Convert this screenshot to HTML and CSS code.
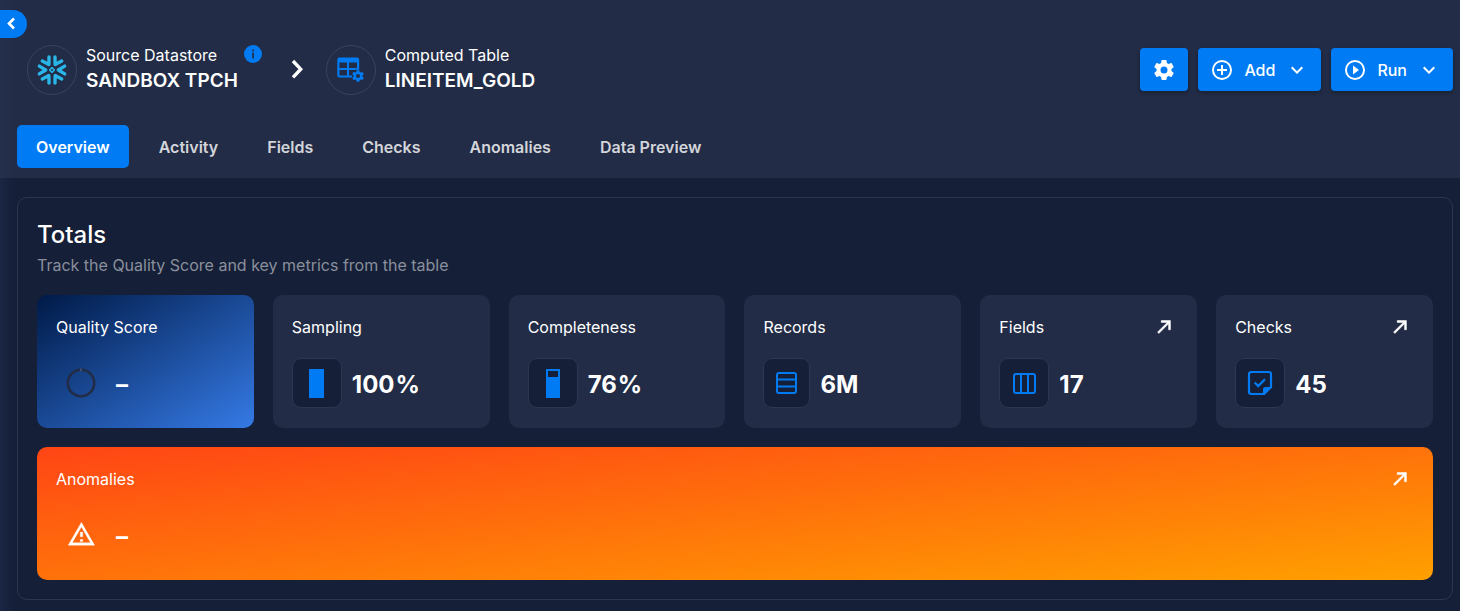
FILE: index.html
```html
<!DOCTYPE html>
<html lang="en">
<head>
<meta charset="utf-8">
<meta name="viewport" content="width=device-width, initial-scale=1">
<title>LINEITEM_GOLD</title>
<link rel="stylesheet" href="styles.css">
</head>
<body>
<svg class="defs" aria-hidden="true">
  <symbol id="gear" viewBox="0 0 24 24"><path d="M12,15.5A3.5,3.5 0 0,1 8.5,12A3.5,3.5 0 0,1 12,8.5A3.5,3.5 0 0,1 15.5,12A3.5,3.5 0 0,1 12,15.5M19.43,12.97C19.47,12.65 19.5,12.33 19.5,12C19.5,11.67 19.47,11.34 19.43,11L21.54,9.37C21.73,9.22 21.78,8.95 21.66,8.73L19.66,5.27C19.54,5.05 19.27,4.96 19.05,5.05L16.56,6.05C16.04,5.66 15.5,5.32 14.87,5.07L14.5,2.42C14.46,2.18 14.25,2 14,2H10C9.75,2 9.54,2.18 9.5,2.42L9.13,5.07C8.5,5.32 7.96,5.66 7.44,6.05L4.95,5.05C4.73,4.96 4.46,5.05 4.34,5.27L2.34,8.73C2.21,8.95 2.27,9.22 2.46,9.37L4.57,11C4.53,11.34 4.5,11.67 4.5,12C4.5,12.33 4.53,12.65 4.57,12.97L2.46,14.63C2.27,14.78 2.21,15.05 2.34,15.27L4.34,18.73C4.46,18.95 4.73,19.03 4.95,18.95L7.44,17.94C7.96,18.34 8.5,18.68 9.13,18.93L9.5,21.58C9.54,21.82 9.75,22 10,22H14C14.25,22 14.46,21.82 14.5,21.58L14.87,18.93C15.5,18.67 16.04,18.34 16.56,17.94L19.05,18.95C19.27,19.03 19.54,18.95 19.66,18.73L21.66,15.27C21.78,15.05 21.73,14.78 21.54,14.63L19.43,12.97Z"/></symbol>
  <symbol id="chevron-down" viewBox="0 0 24 24"><path d="M7.41,8.58L12,13.17L16.59,8.58L18,10L12,16L6,10L7.41,8.58Z"/></symbol>
  <symbol id="arrow" viewBox="0 0 24 24"><path d="M5,17.59L15.59,7H9V5H19V15H17V8.41L6.41,19L5,17.59Z"/></symbol>
</svg>

<header class="header">
  <button class="toggle" type="button" aria-label="Expand tree">
    <svg width="22" height="22" viewBox="0 0 22 22"><path d="M14 5.5L9 10.5L14 15.5" fill="none" stroke="#fff" stroke-width="2.6"/></svg>
  </button>
  <div class="topbar">
    <nav class="crumbs" aria-label="Breadcrumb">
      <div class="crumb">
        <span class="avatar">
          <svg width="32" height="32" viewBox="-16 -16 32 32">
            <g fill="none" stroke="#29b5e8" stroke-width="3.4" stroke-linecap="round" stroke-linejoin="round">
              <path d="M-12.7-3.9L-6.3 0L-12.7 3.9"/>
              <path d="M-12.7-3.9L-6.3 0L-12.7 3.9" transform="rotate(60)"/>
              <path d="M-12.7-3.9L-6.3 0L-12.7 3.9" transform="rotate(120)"/>
              <path d="M-12.7-3.9L-6.3 0L-12.7 3.9" transform="rotate(180)"/>
              <path d="M-12.7-3.9L-6.3 0L-12.7 3.9" transform="rotate(240)"/>
              <path d="M-12.7-3.9L-6.3 0L-12.7 3.9" transform="rotate(300)"/>
            </g>
            <path d="M0-2.4L2.4 0L0 2.4L-2.4 0Z" fill="none" stroke="#29b5e8" stroke-width="1.5" stroke-linejoin="round"/>
          </svg>
        </span>
        <span class="crumb-text"><span class="kind">Source Datastore</span><span class="name">SANDBOX TPCH</span></span>
        <button class="info" type="button" aria-label="Datastore details">
          <svg width="18" height="18" viewBox="0 0 18 18"><circle cx="9" cy="9" r="9" fill="#007bf3"/><path d="M8.2 7.6h1.7v6H8.2zM8.2 4.4h1.7v1.8H8.2z" fill="#222c46"/></svg>
        </button>
      </div>
      <svg class="sep" width="16" height="24" viewBox="0 0 16 24"><path d="M4 3L11.7 11.2L4 19.4" fill="none" stroke="#fff" stroke-width="3.4"/></svg>
      <div class="crumb">
        <span class="avatar">
          <svg width="32" height="32" viewBox="2 0 32 32" fill="#007bf3">
            <path fill-rule="evenodd" d="M6.5 3.5H24A2.2 2.2 0 0 1 26.2 5.7V23.5H6.5A2.2 2.2 0 0 1 4.3 21.3V5.7A2.2 2.2 0 0 1 6.5 3.5ZM6.4 8.6V14H14V8.6ZM16 8.6V14H24V8.6ZM6.4 16V21.4H14V16ZM16 16V21.4H24V16Z"/>
            <path d="M19 24V19L22 15.8L27 15.8V24Z" fill="#222c46"/>
            <svg x="18" y="15" width="14" height="14" viewBox="0 0 24 24"><use href="#gear"/></svg>
          </svg>
        </span>
        <span class="crumb-text"><span class="kind">Computed Table</span><span class="name">LINEITEM_GOLD</span></span>
      </div>
    </nav>
    <div class="actions">
      <button class="btn" type="button" aria-label="Settings"><svg class="i24"><use href="#gear"/></svg></button>
      <button class="btn" type="button">
        <svg class="i24" viewBox="0 0 24 24"><path d="M12,20C7.59,20 4,16.41 4,12C4,7.59 7.59,4 12,4C16.41,4 20,7.59 20,12C20,16.41 16.41,20 12,20M12,2A10,10 0 0,0 2,12A10,10 0 0,0 12,22A10,10 0 0,0 22,12A10,10 0 0,0 12,2M13,7H11V11H7V13H11V17H13V13H17V11H13V7Z"/></svg>
        <span>Add</span>
        <svg class="i24"><use href="#chevron-down"/></svg>
      </button>
      <button class="btn" type="button">
        <svg class="i24" viewBox="0 0 24 24"><path d="M12,20C7.59,20 4,16.41 4,12C4,7.59 7.59,4 12,4C16.41,4 20,7.59 20,12C20,16.41 16.41,20 12,20M12,2A10,10 0 0,0 2,12A10,10 0 0,0 12,22A10,10 0 0,0 22,12A10,10 0 0,0 12,2M10,16.5L16,12L10,7.5V16.5Z"/></svg>
        <span>Run</span>
        <svg class="i24"><use href="#chevron-down"/></svg>
      </button>
    </div>
  </div>
  <nav class="tabs" aria-label="Sections">
    <a class="tab active" href="#overview" aria-current="page">Overview</a>
    <a class="tab" href="#activity">Activity</a>
    <a class="tab" href="#fields">Fields</a>
    <a class="tab" href="#checks">Checks</a>
    <a class="tab" href="#anomalies">Anomalies</a>
    <a class="tab" href="#preview">Data Preview</a>
  </nav>
</header>

<main class="main">
  <section class="panel">
    <h2 class="title">Totals</h2>
    <p class="subtitle">Track the Quality Score and key metrics from the table</p>
    <div class="cards">
      <article class="card quality">
        <div class="card-head"><h3 class="label">Quality Score</h3></div>
        <div class="metric">
          <span class="tile plain"><svg width="30" height="30" viewBox="0 0 30 30"><circle cx="15" cy="15" r="13.2" fill="none" stroke="#222c46" stroke-width="2.6"/><path d="M15 .5V3.2" stroke="#5d7093"/></svg></span>
          <span class="value">–</span>
        </div>
      </article>
      <article class="card">
        <div class="card-head"><h3 class="label">Sampling</h3></div>
        <div class="metric">
          <span class="tile"><svg width="15" height="29"><rect width="15" height="29" fill="#007bf3"/></svg></span>
          <span class="value">100<span class="unit">%</span></span>
        </div>
      </article>
      <article class="card">
        <div class="card-head"><h3 class="label">Completeness</h3></div>
        <div class="metric">
          <span class="tile"><svg width="14" height="29"><path fill="#007bf3" fill-rule="evenodd" d="M0 0H14V29H0ZM2 2V8H12V2Z"/></svg></span>
          <span class="value">76<span class="unit">%</span></span>
        </div>
      </article>
      <article class="card">
        <div class="card-head"><h3 class="label">Records</h3></div>
        <div class="metric">
          <span class="tile narrow"><svg width="21" height="22" viewBox="0 0 21 22" fill="none" stroke="#007bf3" stroke-width="2"><rect x="1" y="1" width="19" height="20" rx="2"/><path d="M1 7.5H20M1 14.5H20"/></svg></span>
          <span class="value">6M</span>
        </div>
      </article>
      <article class="card">
        <div class="card-head"><h3 class="label">Fields</h3><a class="go" href="#fields" aria-label="Open fields"><svg width="22" height="22"><use href="#arrow"/></svg></a></div>
        <div class="metric">
          <span class="tile"><svg width="23" height="21" viewBox="0 0 23 21" fill="none" stroke="#007bf3" stroke-width="2"><rect x="1" y="1" width="21" height="19" rx="2"/><path d="M8 1V20M15 1V20"/></svg></span>
          <span class="value">17</span>
        </div>
      </article>
      <article class="card">
        <div class="card-head"><h3 class="label">Checks</h3><a class="go" href="#checks" aria-label="Open checks"><svg width="22" height="22"><use href="#arrow"/></svg></a></div>
        <div class="metric">
          <span class="tile"><svg width="26" height="26" viewBox="0 0 26 26"><path d="M16.5 24H4.2A2.2 2.2 0 0 1 2 21.8V4.2A2.2 2.2 0 0 1 4.2 2H21.8A2.2 2.2 0 0 1 24 4.2V17Z" fill="none" stroke="#007bf3" stroke-width="2.2" stroke-linejoin="round"/><path d="M16 25V19.5A2.5 2.5 0 0 1 18.5 17H25V17.5L17.5 25Z" fill="#007bf3"/><path d="M7.7 12.5L11.2 16L18 9.2" fill="none" stroke="#007bf3" stroke-width="2.3"/></svg></span>
          <span class="value">45</span>
        </div>
      </article>
      <article class="card anomalies">
        <div class="card-head"><h3 class="label">Anomalies</h3><a class="go" href="#anomalies" aria-label="Open anomalies"><svg width="22" height="22"><use href="#arrow"/></svg></a></div>
        <div class="metric">
          <span class="tile plain"><svg width="29" height="29" viewBox="0 1 24 24" fill="#fff"><path d="M12,2L1,21H23M12,6L19.53,19H4.47M11,10V14H13V10M11,16V18H13V16" stroke="#fff" stroke-width=".3"/></svg></span>
          <span class="value">–</span>
        </div>
      </article>
    </div>
  </section>
</main>
</body>
</html>
```
FILE: styles.css
```css
:root {
  --bg: #151f38;
  --surface: #222c46;
  --line: #2c3650;
  --blue: #007bf3;
}

* {
  box-sizing: border-box;
}

body {
  margin: 0;
  min-height: 100vh;
  background: linear-gradient(to right, #1a2644, transparent 14px) var(--bg);
  color: #fff;
  font-family: Inter, "Open Sans", sans-serif;
  font-size: 16px;
  line-height: 24px;
}

button {
  border: 0;
  padding: 0;
  background: none;
  color: inherit;
  font: inherit;
  cursor: pointer;
}

svg {
  display: block;
  flex: none;
}

.defs {
  position: absolute;
  width: 0;
  height: 0;
}

.i24 {
  width: 24px;
  height: 24px;
  fill: currentColor;
}

.header {
  position: relative;
  padding: 45px 7px 10px 17px;
  background: linear-gradient(to right, #25304d, transparent 14px) var(--surface);
}

.toggle {
  position: absolute;
  top: 10px;
  left: 0;
  width: 27px;
  height: 28px;
  border-radius: 0 14px 14px 0;
  background: var(--blue);
}

.topbar {
  display: flex;
  align-items: flex-start;
  justify-content: space-between;
}

.crumbs,
.crumb {
  display: flex;
  align-items: center;
}

.crumbs {
  padding-left: 10px;
}

.avatar {
  display: grid;
  place-items: center;
  width: 50px;
  height: 50px;
  margin-right: 9px;
  border: 1px solid #3a435b;
  border-radius: 50%;
}

.crumb-text {
  display: flex;
  flex-direction: column;
  gap: 2px;
}

.kind {
  line-height: 20px;
}

.name {
  font-size: 19px;
  font-weight: 600;
  line-height: 28px;
}

.info {
  align-self: flex-start;
  margin-left: 6px;
}

.sep {
  margin: 0 21px 0 27px;
}

.actions {
  display: flex;
  gap: 10px;
  padding-top: 3px;
}

.btn {
  display: flex;
  align-items: center;
  gap: 10px;
  height: 43px;
  padding: 0 12px;
  border-radius: 4px;
  background: var(--blue);
  box-shadow: 0 2px 4px rgba(0, 0, 0, 0.3);
  font-weight: 500;
}

.tabs {
  display: flex;
  gap: 11px;
  margin-top: 30px;
}

.tab {
  padding: 1px 19px 0;
  border-radius: 5px;
  color: #d3d5da;
  font-weight: 600;
  line-height: 42px;
  text-decoration: none;
}

.tab.active {
  background: var(--blue);
  color: #fff;
}

.main {
  padding: 19px 7px 11px 17px;
}

.panel {
  padding: 19px;
  border: 1px solid var(--line);
  border-radius: 10px;
}

.title {
  margin: 0;
  font-size: 24px;
  font-weight: 500;
  line-height: 36px;
}

.subtitle {
  margin: 0 0 18px;
  color: #8a8f9c;
  line-height: 24px;
}

.cards {
  display: grid;
  grid-template-columns: repeat(6, 1fr);
  gap: 19px;
}

.card {
  padding: 20px 22px 20px 19px;
  border-radius: 10px;
  background: var(--surface);
}

.quality {
  background: linear-gradient(to bottom right, #001a47, #357ae6);
}

.anomalies {
  grid-column: 1 / -1;
  background: linear-gradient(to bottom right, #ff4515, #ffa000);
}

.card-head,
.metric {
  display: flex;
  align-items: center;
}

.card-head {
  justify-content: space-between;
  margin-bottom: 19px;
}

.label {
  margin: 0;
  font-size: 16px;
  font-weight: 400;
  line-height: 24px;
}

.go {
  color: #fff;
}

.go svg {
  fill: currentColor;
  stroke: currentColor;
  stroke-width: 0.6;
}

.tile {
  display: grid;
  place-items: center;
  width: 50px;
  height: 50px;
  border: 1px solid var(--line);
  border-radius: 9px;
  background: var(--bg);
}

.tile.narrow {
  width: 47px;
}

.tile.plain {
  border-color: transparent;
  background: none;
}

.value {
  margin-left: 10px;
  padding-top: 3px;
  font-size: 24px;
  font-weight: 700;
  line-height: 32px;
}

.unit {
  margin-left: 1px;
}
```
